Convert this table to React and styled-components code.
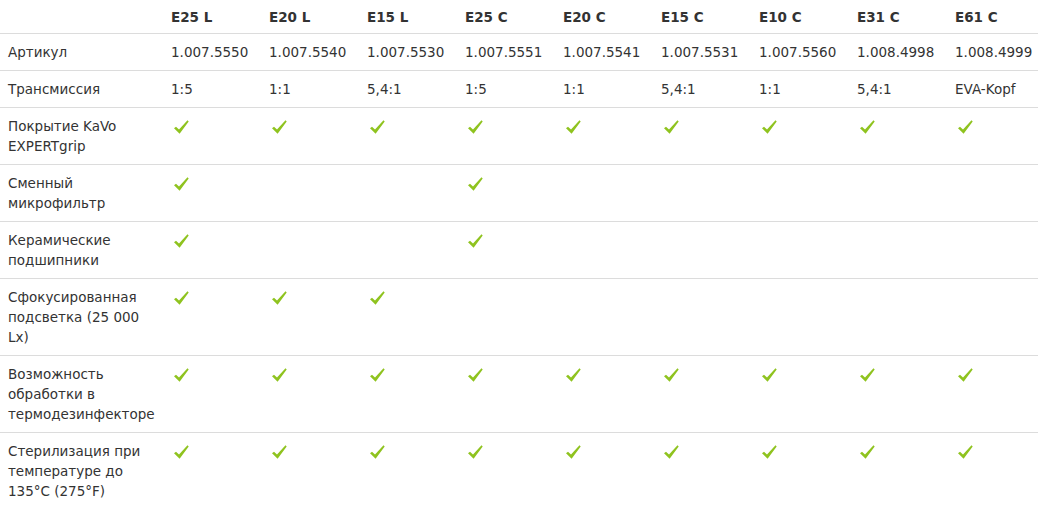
import React from "react"
import styled, { createGlobalStyle } from "styled-components"

const GlobalStyle = createGlobalStyle`
  body {
    margin: 0;
    background: #fff;
    font-family: "DejaVu Sans", Verdana, sans-serif;
    color: #333;
  }
`

const models = ["E25 L", "E20 L", "E15 L", "E25 C", "E20 C", "E15 C", "E10 C", "E31 C", "E61 C"]

const rows = [
  { label: "Артикул", values: ["1.007.5550", "1.007.5540", "1.007.5530", "1.007.5551", "1.007.5541", "1.007.5531", "1.007.5560", "1.008.4998", "1.008.4999"] },
  { label: "Трансмиссия", values: ["1:5", "1:1", "5,4:1", "1:5", "1:1", "5,4:1", "1:1", "5,4:1", "EVA-Kopf"] },
  { label: "Покрытие KaVo EXPERTgrip", checks: [1, 1, 1, 1, 1, 1, 1, 1, 1] },
  { label: "Сменный микрофильтр", checks: [1, 0, 0, 1, 0, 0, 0, 0, 0] },
  { label: "Керамические подшипники", checks: [1, 0, 0, 1, 0, 0, 0, 0, 0] },
  { label: "Сфокусированная подсветка (25 000 Lx)", checks: [1, 1, 1, 0, 0, 0, 0, 0, 0] },
  { label: "Возможность обработки в термодезинфекторе", checks: [1, 1, 1, 1, 1, 1, 1, 1, 1] },
  { label: "Стерилизация при температуре до 135°C (275°F)", checks: [1, 1, 1, 1, 1, 1, 1, 1, 1] },
]

const Table = styled.div`
  width: 1045px;
  overflow: hidden;
`

const Row = styled.div`
  display: grid;
  grid-template-columns: 163px repeat(9, 98px);
  border-top: ${(p) => (p.head ? "none" : "1px solid #dcdcdc")};
`

const Cell = styled.div`
  padding: ${(p) => (p.head ? "7px 8px 6px" : "8px")};
  font-size: 13.5px;
  line-height: 20px;
  font-weight: ${(p) => (p.head ? "bold" : "normal")};
  white-space: ${(p) => (p.label ? "normal" : "nowrap")};
`

const Check = styled.svg`
  display: block;
  width: 15px;
  height: 14px;
  margin: 4px 0 0 3px;
`

const CheckMark = () => (
  <Check viewBox="0 0 15 14">
    <polygon points="0,8.2 2,6.8 5,9.6 13.5,0.3 14.7,1.4 5.6,13.8" fill="#8fc31f" />
  </Check>
)

const App = () => {
  return (
    <>
      <GlobalStyle />
      <Table>
        <Row head>
          <Cell head />
          {models.map((m) => (
            <Cell head key={m}>{m}</Cell>
          ))}
        </Row>
        {rows.map((r) => (
          <Row key={r.label}>
            <Cell label>{r.label}</Cell>
            {r.values
              ? r.values.map((v, i) => <Cell key={i}>{v}</Cell>)
              : r.checks.map((c, i) => <Cell key={i}>{c ? <CheckMark /> : null}</Cell>)}
          </Row>
        ))}
      </Table>
    </>
  )
}

export default App
